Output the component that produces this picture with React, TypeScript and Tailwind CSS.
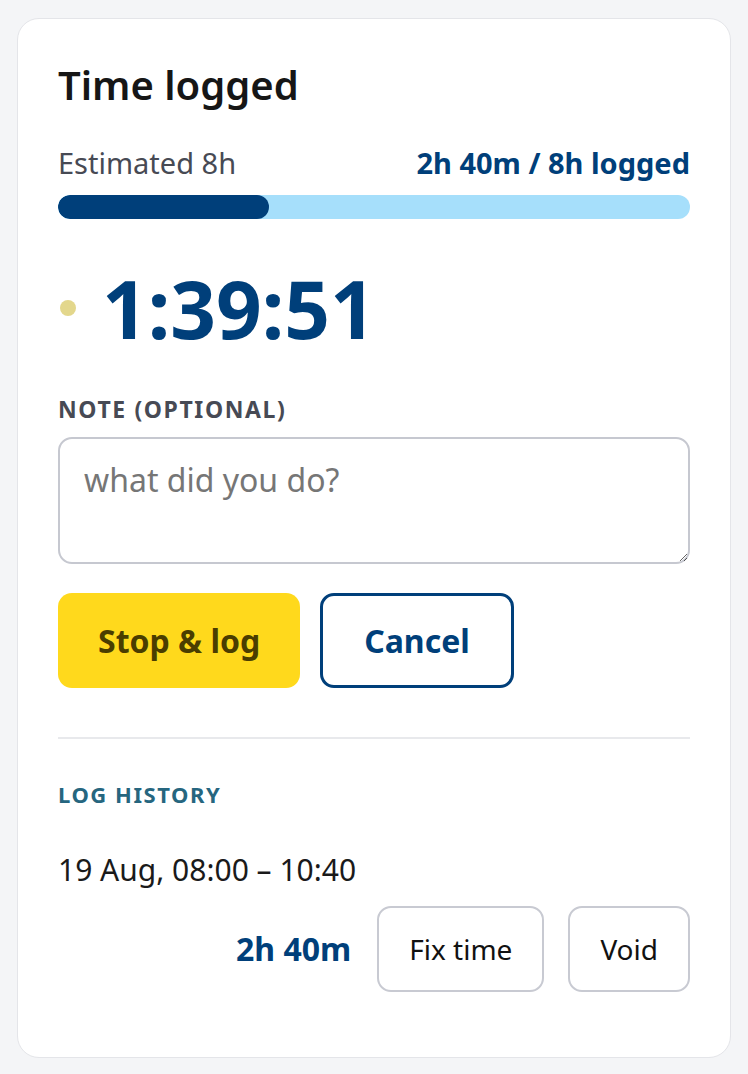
import { useState } from 'react';

const font = { fontFamily: '"Noto Sans", "Open Sans", sans-serif' };

export default function App() {
  const [note, setNote] = useState('');
  const logged = 160;
  const estimate = 480;
  const pct = (logged / estimate) * 100;

  return (
    <div className="min-h-[1074px] bg-[#f4f5f7] px-[17px] pt-[18px]" style={font}>
      <div className="rounded-[22px] border border-[#e4e5e9] bg-white p-10">
        <h2 className="text-[40px] leading-[52px] font-semibold text-[#161616]">Time logged</h2>

        <div className="mt-8 flex items-center justify-between text-[29px] leading-[40px]">
          <span className="text-[#474a54]">Estimated 8h</span>
          <span className="font-bold text-[#003f7a]">2h 40m / 8h logged</span>
        </div>
        <div className="mt-3 h-6 w-full overflow-hidden rounded-full bg-[#a6dffb]">
          <div className="h-full rounded-full bg-[#003f7a]" style={{ width: `${pct}%` }} />
        </div>

        <div className="mt-[49px] flex items-center gap-[26px]">
          <span className="ml-[2px] h-4 w-4 rounded-full bg-[#e3d78c]" />
          <span className="text-[80px] leading-[80px] font-bold text-[#003f7a] tabular-nums">1:39:51</span>
        </div>

        <label className="mt-[46px] block text-[23px] leading-[30px] font-bold uppercase tracking-[0.07em] text-[#474a54]">
          Note (optional)
        </label>
        <textarea
          value={note}
          onChange={(e) => setNote(e.target.value)}
          placeholder="what did you do?"
          className="mt-[13px] block h-[127px] w-full rounded-[14px] border-2 border-[#c6c8d0] px-6 pt-[21px] text-[32px] leading-[40px] text-[#161616] outline-none placeholder:text-[#767676]"
          style={font}
        />

        <div className="mt-[29px] flex gap-5">
          <button className="h-[95px] rounded-[14px] bg-[#ffd91c] px-[40px] text-[32px] leading-[40px] font-bold text-[#4a3d00]">
            Stop &amp; log
          </button>
          <button className="h-[95px] rounded-[14px] border-[3px] border-[#003f7a] bg-white px-[41px] text-[32px] leading-[40px] font-bold text-[#003f7a]">
            Cancel
          </button>
        </div>

        <div className="mt-[49px] h-[2px] w-full bg-[#e8e9ec]" />

        <h3 className="mt-10 text-[22px] leading-[30px] font-bold uppercase tracking-[0.07em] text-[#26667f]">
          Log history
        </h3>

        <ul className="mt-[41px]">
          <li className="mb-[25px]">
            <div className="text-[30px] leading-[40px] text-[#1a1a1a]">19 Aug, 08:00 – 10:40</div>
            <div className="mt-4 flex items-center justify-end gap-6">
              <span className="mr-[2px] text-[32px] leading-[40px] font-bold text-[#003f7a]">2h 40m</span>
              <button className="h-[86px] rounded-[14px] border-2 border-[#c8cad2] bg-white px-[30px] text-[28px] leading-[40px] text-[#111]">
                Fix time
              </button>
              <button className="h-[86px] rounded-[14px] border-2 border-[#c8cad2] bg-white px-[30px] text-[28px] leading-[40px] text-[#111]">
                Void
              </button>
            </div>
          </li>
        </ul>
      </div>
    </div>
  );
}
